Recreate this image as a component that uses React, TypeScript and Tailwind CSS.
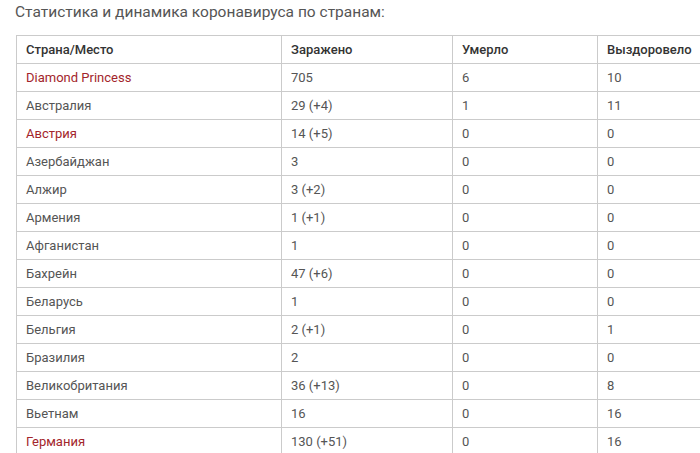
const rows: [string, string, string, string, boolean][] = [
  ['Diamond Princess', '705', '6', '10', true],
  ['Австралия', '29 (+4)', '1', '11', false],
  ['Австрия', '14 (+5)', '0', '0', true],
  ['Азербайджан', '3', '0', '0', false],
  ['Алжир', '3 (+2)', '0', '0', false],
  ['Армения', '1 (+1)', '0', '0', false],
  ['Афганистан', '1', '0', '0', false],
  ['Бахрейн', '47 (+6)', '0', '0', false],
  ['Беларусь', '1', '0', '0', false],
  ['Бельгия', '2 (+1)', '0', '1', false],
  ['Бразилия', '2', '0', '0', false],
  ['Великобритания', '36 (+13)', '0', '8', false],
  ['Вьетнам', '16', '0', '16', false],
  ['Германия', '130 (+51)', '0', '16', true],
];

const App = () => {
  return (
    <div className="w-[700px] h-[453px] overflow-hidden bg-white font-['Roboto',sans-serif]">
      <p className="pl-[15px] pt-[2px] text-[15.5px] leading-[20px] text-[#555]">
        Статистика и динамика коронавируса по странам:
      </p>

      <table className="mt-[13px] ml-[16px] w-[720px] border-collapse text-[13px] text-[#555]">
        <colgroup>
          <col className="w-[265px]" />
          <col className="w-[171px]" />
          <col className="w-[145px]" />
          <col />
        </colgroup>
        <thead>
          <tr className="h-[28px]">
            {['Страна/Место', 'Заражено', 'Умерло', 'Выздоровело'].map((h) => (
              <th
                key={h}
                className="border border-[#cbcbcb] px-[9px] text-left font-medium text-[#333]"
              >
                {h}
              </th>
            ))}
          </tr>
        </thead>
        <tbody>
          {rows.map(([name, infected, died, recovered, link]) => (
            <tr key={name} className="h-[28px]">
              <td
                className={
                  link
                    ? 'border border-[#cbcbcb] px-[9px] text-[#a3252b]'
                    : 'border border-[#cbcbcb] px-[9px]'
                }
              >
                {name}
              </td>
              <td className="border border-[#cbcbcb] px-[9px]">{infected}</td>
              <td className="border border-[#cbcbcb] px-[9px]">{died}</td>
              <td className="border border-[#cbcbcb] px-[9px]">{recovered}</td>
            </tr>
          ))}
        </tbody>
      </table>
    </div>
  );
};

export default App;
